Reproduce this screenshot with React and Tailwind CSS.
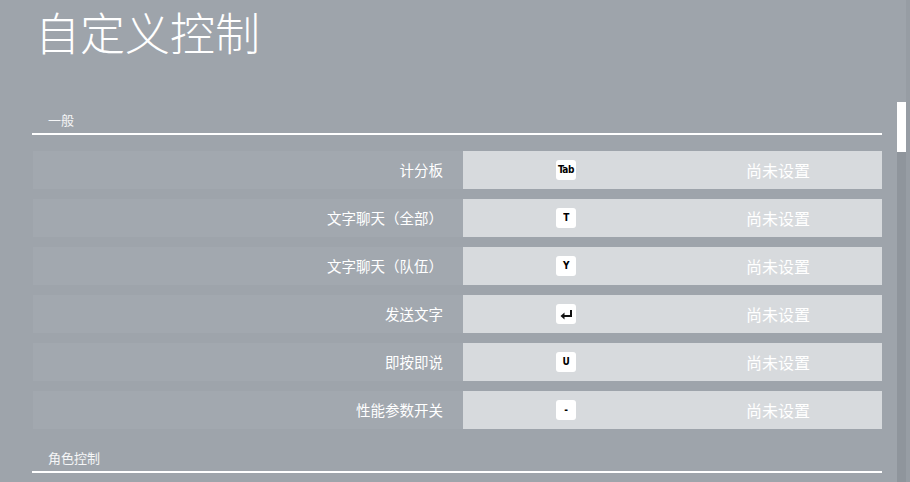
import React from 'react';

const rows = [
    { label: '计分板', key: 'Tab' },
    { label: '文字聊天（全部）', key: 'T' },
    { label: '文字聊天（队伍）', key: 'Y' },
    { label: '发送文字', key: 'enter' },
    { label: '即按即说', key: 'U' },
    { label: '性能参数开关', key: '-' },
];

function KeyCap({ k }) {
    return (
        <div className="w-[20px] h-[20px] rounded-[3px] bg-white flex items-center justify-center text-black">
            {k === 'enter' ? (
                <svg width="13" height="11" viewBox="0 0 13 11">
                    <path d="M11 1 V7 H4" fill="none" stroke="#111" strokeWidth="2" />
                    <path d="M0.5 7 L4.5 3.5 V10.5 Z" fill="#111" />
                </svg>
            ) : (
                <span className="text-[10px] font-bold leading-none tracking-[-0.4px] scale-y-110 font-['DejaVu_Sans_Condensed','Liberation_Sans_Narrow',sans-serif]">
                    {k}
                </span>
            )}
        </div>
    );
}

function SectionHeader({ title, className }) {
    return (
        <div className={`border-b-2 border-white pb-[3px] pl-[16px] ${className}`}>
            <div className="text-[13px] leading-[20px] text-white/90">{title}</div>
        </div>
    );
}

export default function App() {
    return (
        <div className="w-[910px] h-[482px] overflow-hidden bg-[#9ea4ab] flex font-['Noto_Sans_CJK_SC','Noto_Sans',sans-serif]">
            <div className="w-[850px] ml-[32px] flex flex-col shrink-0">
                <h1 className="pt-[5px] pl-[3px] text-[45px] leading-[53px] font-light text-white">自定义控制</h1>

                <SectionHeader title="一般" className="mt-[52px]" />

                <div className="mt-[16px] flex flex-col gap-[10px]">
                    {rows.map((row, i) => (
                        <div key={i} className="h-[38px] flex">
                            <div className="w-[430px] ml-[1px] bg-[#a2a8af] flex items-center justify-end pr-[20px] text-[14.5px] text-white">
                                {row.label}
                            </div>
                            <div className="flex-1 bg-[#d7dadd] flex items-center">
                                <div className="ml-[93px]">
                                    <KeyCap k={row.key} />
                                </div>
                                <div className="ml-[170px] text-[16px] text-white">尚未设置</div>
                            </div>
                        </div>
                    ))}
                </div>

                <SectionHeader title="角色控制" className="mt-[19px]" />
            </div>

            <div className="ml-[15px] w-[9px] mt-[102px] flex flex-col shrink-0">
                <div className="h-[50px] bg-white" />
                <div className="flex-1 bg-[#8f959c]" />
            </div>
            <div className="flex-1 bg-[#979da4]" />
        </div>
    );
}
